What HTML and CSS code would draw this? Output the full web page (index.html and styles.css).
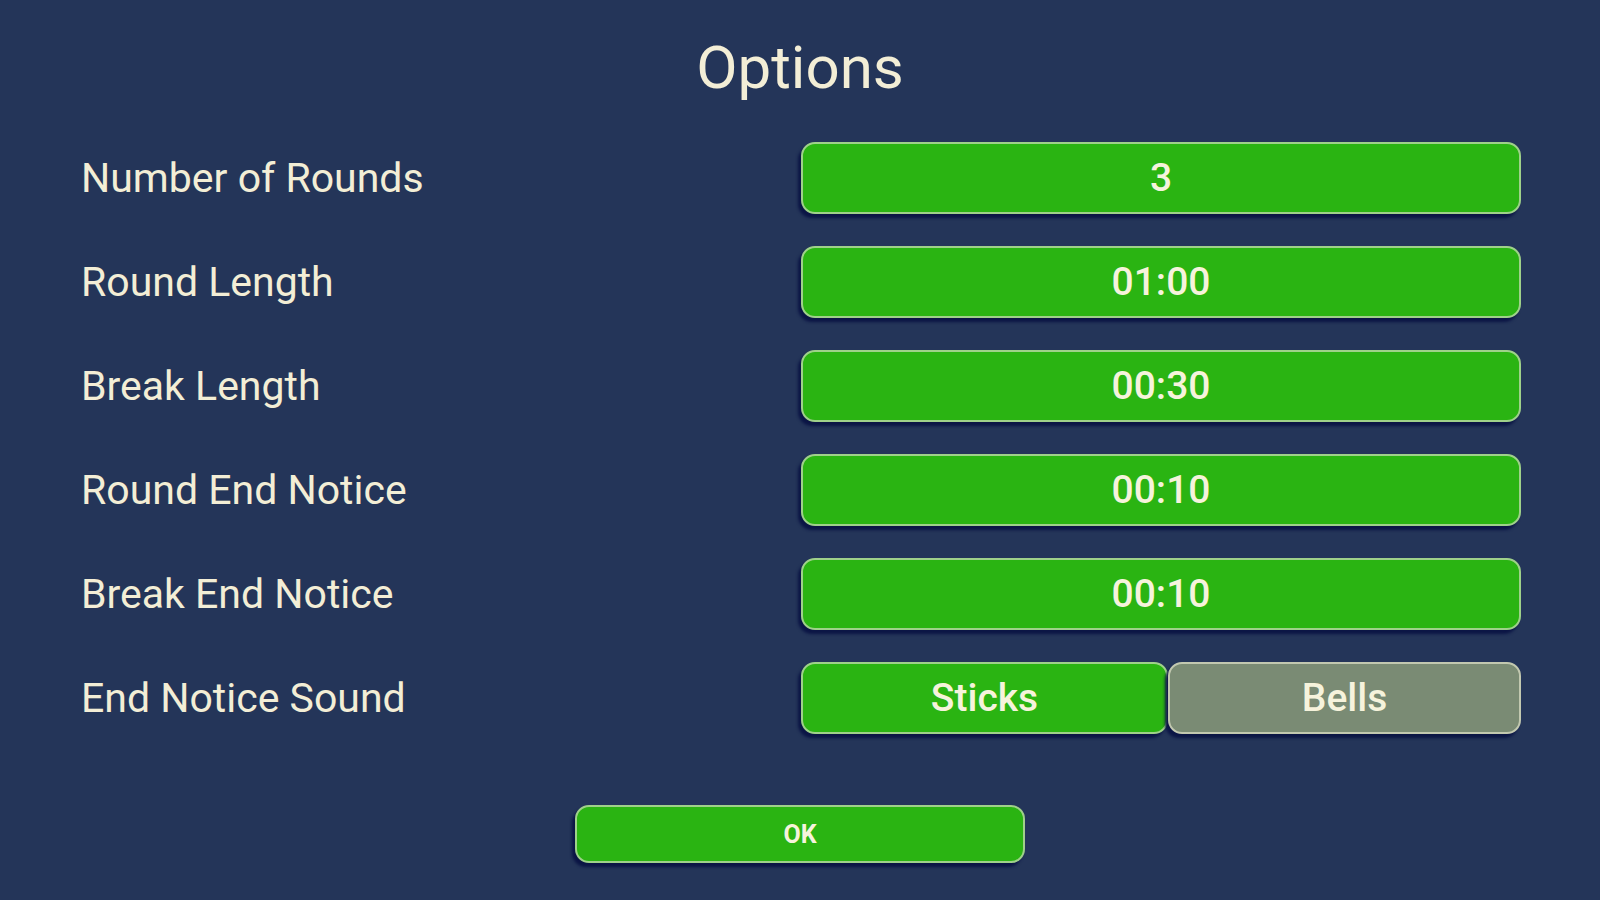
FILE: index.html
```html
<!DOCTYPE html>
<html>
<head>
<meta charset="utf-8">
<link rel="stylesheet" href="styles.css">
</head>
<body>
<div class="screen">
  <h1 class="title">Options</h1>
  <div class="rows">
    <div class="row">
      <div class="label">Number of Rounds</div>
      <div class="control"><div class="btn">3</div></div>
    </div>
    <div class="row">
      <div class="label">Round Length</div>
      <div class="control"><div class="btn">01:00</div></div>
    </div>
    <div class="row">
      <div class="label">Break Length</div>
      <div class="control"><div class="btn">00:30</div></div>
    </div>
    <div class="row">
      <div class="label">Round End Notice</div>
      <div class="control"><div class="btn">00:10</div></div>
    </div>
    <div class="row">
      <div class="label">Break End Notice</div>
      <div class="control"><div class="btn">00:10</div></div>
    </div>
    <div class="row">
      <div class="label">End Notice Sound</div>
      <div class="control split">
        <div class="btn btn-left">Sticks</div>
        <div class="btn btn-right off">Bells</div>
      </div>
    </div>
  </div>
  <div class="footer">
    <div class="btn ok">OK</div>
  </div>
</div>
</body>
</html>
```

FILE: styles.css
```css
html, body {
  margin: 0;
  padding: 0;
  background: #243559;
}
.screen {
  width: 1600px;
  height: 900px;
  box-sizing: border-box;
  font-family: Roboto, "Liberation Sans", sans-serif;
  color: #f3eed6;
  display: flex;
  flex-direction: column;
}
.title {
  margin: 0;
  padding-top: 34px;
  height: 106px;
  box-sizing: border-box;
  text-align: center;
  font-size: 60px;
  font-weight: 400;
  line-height: 68px;
}
.rows {
  display: flex;
  flex-direction: column;
  gap: 32px;
  padding: 36px 0 0 81px;
}
.row {
  display: flex;
  align-items: center;
  height: 72px;
}
.label {
  width: 720px;
  font-size: 41px;
  line-height: 72px;
}
.control {
  width: 720px;
  height: 72px;
  display: flex;
}
.btn {
  flex: 1;
  box-sizing: border-box;
  height: 72px;
  background: #2ab412;
  border: 2px solid #9fd18a;
  border-radius: 14px;
  box-shadow: -3px 4px 3px #0b1545;
  display: flex;
  align-items: center;
  justify-content: center;
  font-size: 39px;
  font-weight: 500;
  color: #f6f3dc;
}
.split .btn-left {
  flex: 0 0 367px;
}
.btn.off {
  background: #7a8b74;
  border-color: #c2c8b0;
}
.footer {
  display: flex;
  justify-content: center;
  padding-top: 71px;
}
.btn.ok {
  flex: 0 0 450px;
  height: 58px;
  font-size: 25px;
  font-weight: 700;
  border-radius: 14px;
}
```
